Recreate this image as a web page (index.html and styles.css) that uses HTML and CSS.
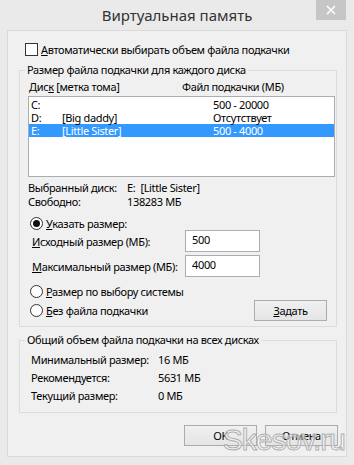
FILE: index.html
```html
<!DOCTYPE html>
<html>
<head>
    <meta charset="utf-8">
    <title>Виртуальная память</title>
    <link rel="stylesheet" href="styles.css">
</head>
<body>
    <div class="window">
        <div class="titlebar">
            <span></span>
            <span class="title">Виртуальная память</span>
            <span class="close">
                <svg width="10" height="10" viewBox="0 0 10 10"><path d="M1 1L9 9M9 1L1 9" stroke="#fff" stroke-width="1.6"/></svg>
            </span>
        </div>
        <div class="client">
            <div class="check-row"><span class="checkbox"></span><span><u>А</u>втоматически выбирать объем файла подкачки</span></div>

            <fieldset class="group group-disks">
                <legend>Размер файла подкачки для каждого диска</legend>
                <div class="list-head">
                    <span class="head-disk">Дис<u>к</u> [метка тома]</span>
                    <span>Файл подкачки (МБ)</span>
                </div>
                <div class="listbox">
                    <div class="list-row"><span class="c-letter">C:</span><span class="c-label"></span><span>500 - 20000</span></div>
                    <div class="list-row"><span class="c-letter">D:</span><span class="c-label">[Big daddy]</span><span>Отсутствует</span></div>
                    <div class="list-row selected"><span class="c-letter">E:</span><span class="c-label">[Little Sister]</span><span>500 - 4000</span></div>
                </div>
                <div class="info first"><span class="info-key">Выбранный диск:</span><span>E:&nbsp; [Little Sister]</span></div>
                <div class="info"><span class="info-key">Свободно:</span><span>138283 МБ</span></div>

                <div class="radio-row custom"><span class="radio checked"></span><span><u>У</u>казать размер:</span></div>
                <div class="field-row"><span class="field-label"><u>И</u>сходный размер (МБ):</span><span class="field">500</span></div>
                <div class="field-row second"><span class="field-label"><u>М</u>аксимальный размер (МБ):</span><span class="field">4000</span></div>
                <div class="radio-row system"><span class="radio"></span><span><u>Р</u>азмер по выбору системы</span></div>
                <div class="radio-row none">
                    <span class="radio"></span><span><u>Б</u>ез файла подкачки</span>
                    <span class="btn btn-set"><u>З</u>адать</span>
                </div>
            </fieldset>

            <fieldset class="group group-total">
                <legend>Общий объем файла подкачки на всех дисках</legend>
                <div class="total-row"><span class="total-key">Минимальный размер:</span><span>16 МБ</span></div>
                <div class="total-row"><span class="total-key">Рекомендуется:</span><span>5631 МБ</span></div>
                <div class="total-row"><span class="total-key">Текущий размер:</span><span>0 МБ</span></div>
            </fieldset>

            <div class="actions">
                <span class="btn">OK</span>
                <span class="btn">Отмена</span>
            </div>
        </div>
        <div class="watermark">Skesov.ru</div>
    </div>
</body>
</html>
```

FILE: styles.css
```css
body {
    margin: 0;
    background: #eaeaea;
    font: 11px "Noto Sans", "DejaVu Sans", sans-serif;
    letter-spacing: -0.35px;
    color: #000;
}
.window {
    position: relative;
    width: 354px;
    height: 465px;
    background: #eaeaea;
    overflow: hidden;
    white-space: nowrap;
}
.window span {
    flex-shrink: 0;
}
.titlebar {
    display: grid;
    grid-template-columns: 1fr auto 1fr;
    height: 30px;
}
.title {
    align-self: center;
    font-size: 15px;
    letter-spacing: 0;
    color: #333;
    line-height: 20px;
}
.close {
    justify-self: end;
    align-self: start;
    width: 30px;
    height: 20px;
    margin-right: 8px;
    background: #c6c6c6;
    display: flex;
    align-items: center;
    justify-content: center;
}
.client {
    box-sizing: border-box;
    width: 340px;
    height: 427px;
    margin: 0 7px 8px 7px;
    border: 1px solid #dadada;
    background: #f0f0f0;
    padding: 11px 8px 0 0;
}
u {
    text-decoration: underline;
    text-underline-offset: 1px;
}

.check-row {
    display: flex;
    align-items: center;
    height: 14px;
    padding-left: 17px;
}
.checkbox {
    box-sizing: border-box;
    width: 13px;
    height: 13px;
    border: 1px solid #333;
    background: #fff;
    margin-right: 3px;
}

.group {
    margin: 7px 1px 0 11px;
    padding: 3px 1px 5px 8px;
    border: 1px solid #dcdcdc;
    min-width: 0;
}
.group legend {
    padding: 0 2px;
    margin-left: -3px;
    line-height: 14px;
}
.group-total {
    margin-top: 6px;
    padding: 4px 1px 7px 11px;
}
.group-total legend {
    margin-left: -6px;
}

.list-head {
    display: flex;
    height: 14px;
    line-height: 14px;
    padding-left: 1px;
}
.head-disk {
    width: 153px;
}
.listbox {
    box-sizing: border-box;
    height: 81px;
    margin-top: 2px;
    border: 1px solid #abadb3;
    background: #fff;
    padding-top: 1px;
}
.list-row {
    display: flex;
    height: 13px;
    line-height: 13px;
    padding-left: 2px;
}
.list-row.selected {
    background: #3399ff;
    color: #fff;
}
.c-letter {
    width: 31px;
}
.c-label {
    width: 151px;
}

.info {
    display: flex;
    height: 14px;
    line-height: 14px;
}
.info.first {
    margin-top: 4px;
}
.info-key {
    width: 99px;
}

.radio-row {
    display: flex;
    align-items: center;
    height: 13px;
    padding-left: 2px;
}
.radio-row.custom {
    margin-top: 8px;
}
.radio-row.system {
    margin-top: 7px;
    height: 14px;
}
.radio-row.none {
    margin-top: 2px;
    height: 21px;
}
.radio {
    box-sizing: border-box;
    width: 13px;
    height: 13px;
    border: 1px solid #333;
    border-radius: 50%;
    background: #fff;
    margin-right: 3px;
    display: flex;
    align-items: center;
    justify-content: center;
}
.radio.checked::after {
    content: "";
    width: 7px;
    height: 7px;
    border-radius: 50%;
    background: #111;
}

.field-row {
    display: flex;
    align-items: center;
    height: 22px;
    padding-left: 4px;
}
.field-row.second {
    margin-top: 3px;
}
.field-label {
    width: 153px;
}
.field {
    box-sizing: border-box;
    width: 75px;
    height: 22px;
    border: 1px solid #abadb3;
    background: #fff;
    padding: 0 0 0 6px;
    line-height: 18px;
}

.btn {
    box-sizing: border-box;
    display: flex;
    align-items: center;
    justify-content: center;
    width: 73px;
    height: 21px;
    border: 1px solid #acacac;
    background: linear-gradient(#f0f0f0, #e5e5e5);
}
.btn-set {
    margin-left: auto;
    margin-right: 8px;
}

.total-row {
    display: flex;
    height: 18px;
    line-height: 18px;
}
.total-key {
    width: 127px;
}

.actions {
    display: flex;
    justify-content: flex-end;
    gap: 8px;
    margin-top: 12px;
}

.watermark {
    position: absolute;
    right: 9px;
    bottom: 8px;
    font: 30px "Liberation Sans", sans-serif;
    color: rgba(255, 255, 255, 0.5);
    -webkit-text-stroke: 1px #b0b0b0;
    letter-spacing: -1px;
}
```
